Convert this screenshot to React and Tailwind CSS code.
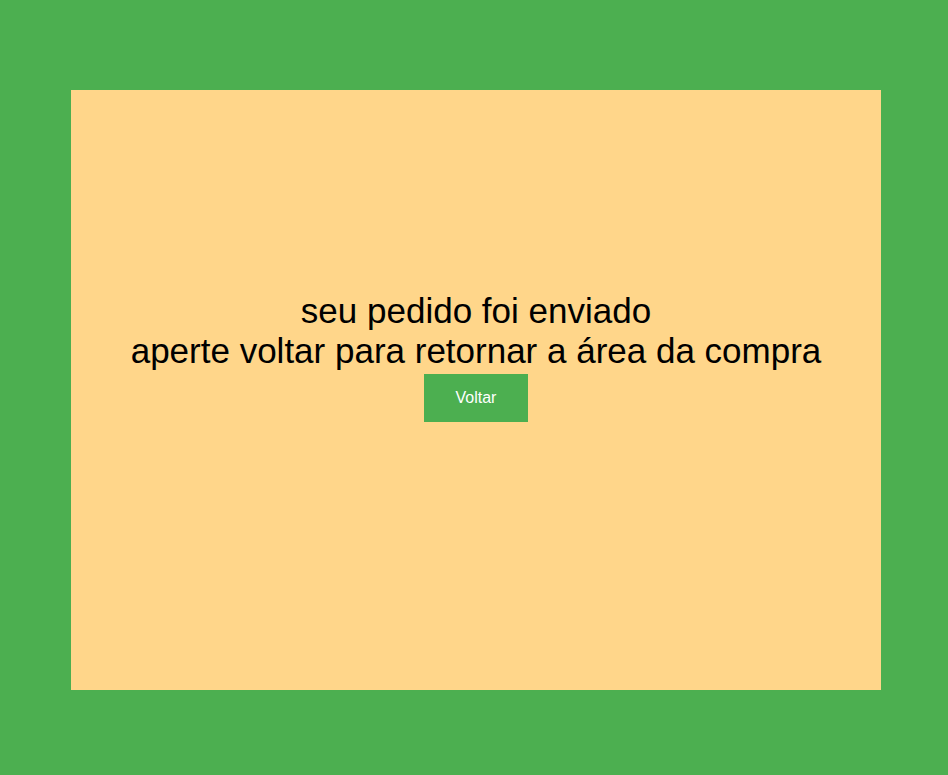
function App() {
  return (
    <div
      className="min-h-[775px] w-full bg-[#4caf50] pt-[90px] pl-[71px]"
      style={{ fontFamily: '"Liberation Sans", Arial, sans-serif' }}
    >
      <div className="w-[810px] h-[600px] bg-[#ffd68a] flex flex-col items-center pt-[201px]">
        <p className="text-[35px] leading-[40px] text-black text-center">
          seu pedido foi enviado
          <br />
          aperte voltar para retornar a área da compra
        </p>
        <button className="mt-[3px] w-[104px] h-[48px] bg-[#4caf50] text-white text-[16px] leading-none">
          Voltar
        </button>
      </div>
    </div>
  );
}

export default App;
